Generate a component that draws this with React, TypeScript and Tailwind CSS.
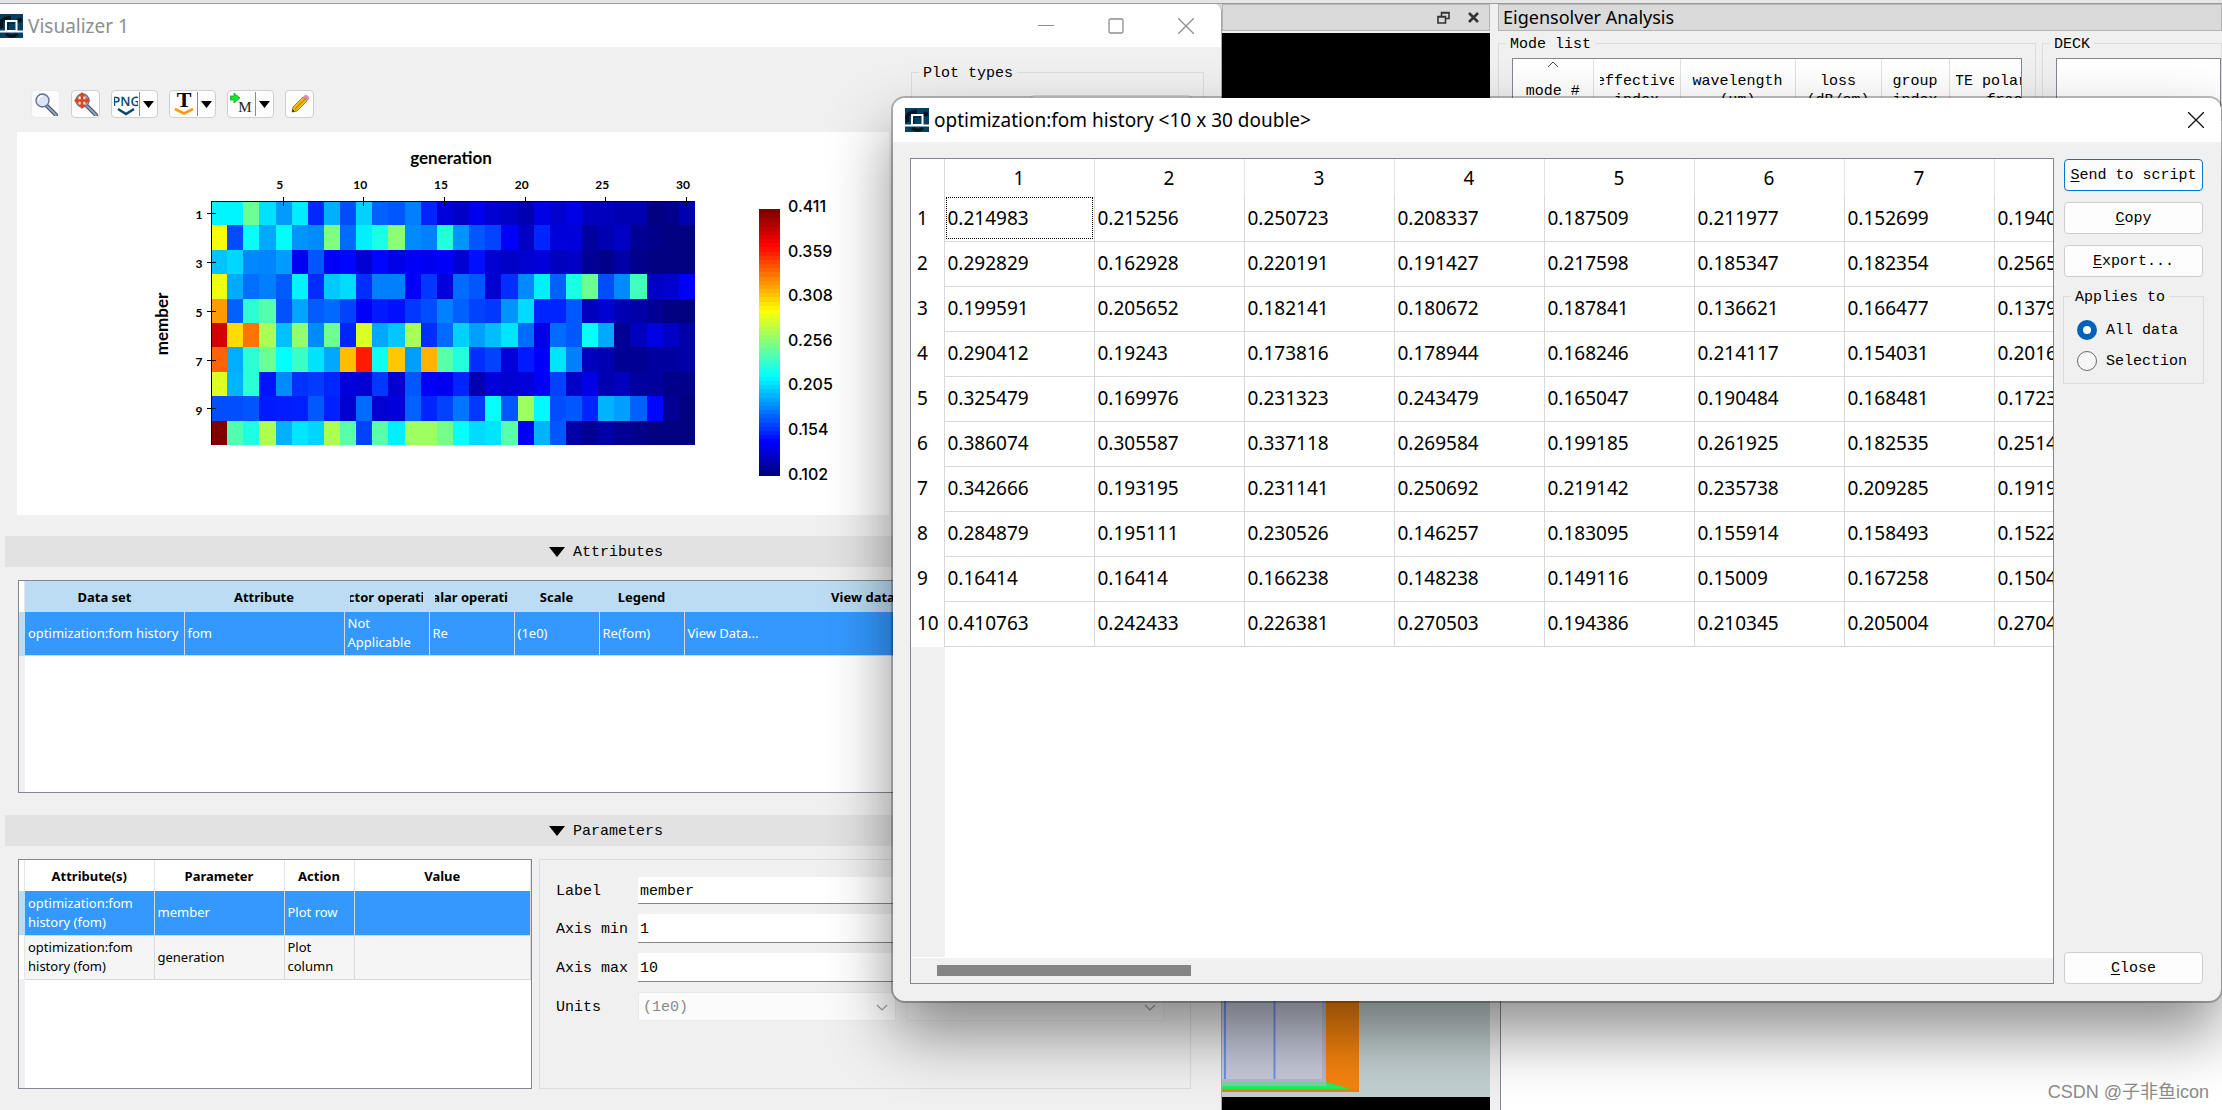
import React from "react";

const SANS = "font-['Noto_Sans','Open_Sans',sans-serif]";
const MONO = "font-['Liberation_Mono','Noto_Sans_CJK_SC',monospace]";

const CELLS: string[][] = [
  ["0.214983", "0.215256", "0.250723", "0.208337", "0.187509", "0.211977", "0.152699", "0.1940"],
  ["0.292829", "0.162928", "0.220191", "0.191427", "0.217598", "0.185347", "0.182354", "0.2565"],
  ["0.199591", "0.205652", "0.182141", "0.180672", "0.187841", "0.136621", "0.166477", "0.1379"],
  ["0.290412", "0.19243", "0.173816", "0.178944", "0.168246", "0.214117", "0.154031", "0.2016"],
  ["0.325479", "0.169976", "0.231323", "0.243479", "0.165047", "0.190484", "0.168481", "0.1723"],
  ["0.386074", "0.305587", "0.337118", "0.269584", "0.199185", "0.261925", "0.182535", "0.2514"],
  ["0.342666", "0.193195", "0.231141", "0.250692", "0.219142", "0.235738", "0.209285", "0.1919"],
  ["0.284879", "0.195111", "0.230526", "0.146257", "0.183095", "0.155914", "0.158493", "0.1522"],
  ["0.16414", "0.16414", "0.166238", "0.148238", "0.149116", "0.15009", "0.167258", "0.1504"],
  ["0.410763", "0.242433", "0.226381", "0.270503", "0.194386", "0.210345", "0.205004", "0.2704"],
];

// Normalised levels (percent of the colour range) for generations 9 to 30.
const LATER: number[][] = [
  [20, 33, 22, 21, 25, 16, 9, 7, 11, 8, 7, 5, 10, 8, 10, 6, 6, 5, 5, 0, 1, 5],
  [23, 36, 40, 51, 26, 25, 41, 27, 21, 19, 12, 7, 16, 9, 9, 3, 5, 7, 2, 1, 0, 0],
  [13, 8, 13, 10, 12, 11, 12, 8, 14, 8, 7, 8, 9, 6, 7, 2, 1, 4, 1, 0, 0, 0],
  [34, 17, 25, 25, 12, 18, 9, 23, 21, 8, 17, 26, 36, 22, 40, 48, 20, 26, 44, 7, 8, 12],
  [19, 12, 15, 14, 18, 20, 25, 22, 19, 18, 27, 34, 16, 16, 21, 6, 8, 5, 4, 2, 0, 0],
  [16, 59, 29, 32, 54, 17, 23, 33, 28, 31, 35, 23, 10, 23, 21, 38, 29, 2, 6, 10, 7, 4],
  [69, 85, 39, 68, 28, 70, 46, 41, 17, 19, 9, 15, 12, 35, 25, 6, 5, 2, 2, 3, 3, 4],
  [9, 8, 18, 8, 21, 12, 11, 16, 5, 9, 8, 9, 12, 19, 7, 10, 5, 6, 3, 3, 1, 1],
  [8, 23, 8, 9, 22, 16, 19, 24, 18, 38, 21, 53, 37, 20, 21, 16, 30, 28, 22, 13, 2, 0],
  [46, 19, 46, 36, 53, 53, 49, 38, 34, 35, 46, 12, 30, 21, 4, 2, 4, 2, 1, 0, 0, 0],
];

const clamp = (n: number) => Math.round(255 * Math.max(0, Math.min(1, n)));
const jet = (t: number) =>
  `rgb(${clamp(Math.min(4 * t - 1.5, 4.5 - 4 * t))},${clamp(Math.min(4 * t - 0.5, 3.5 - 4 * t))},${clamp(Math.min(4 * t + 0.5, 2.5 - 4 * t))})`;

const LEVELS = CELLS.map((row, i) => [
  ...row.map((v) => (parseFloat(v) - 0.102) / 0.309),
  ...LATER[i].map((p) => p / 100),
]);

function Logo() {
  return (
    <svg viewBox="0 0 24 24" className="h-6 w-6 shrink-0" aria-hidden="true">
      <rect width="24" height="24" fill="#04405f" />
      <path d="M3 14C0 7 4 4 12 4" fill="none" stroke="#06121c" strokeWidth="4" />
      <circle cx="20.500" cy="6" r="2.500" fill="#06121c" />
      <path d="M7 20c4 3 8 3 11 0" fill="none" stroke="#06121c" strokeWidth="3" />
      <rect x="7" y="7" width="10.500" height="10" fill="#04405f" stroke="#fff" strokeWidth="2" />
      <path d="M9 16V9h7" fill="none" stroke="#06121c" />
      <path d="M0 17.500h24" stroke="#fff" strokeWidth="2" />
    </svg>
  );
}

function Magnifier() {
  return (
    <>
      <path d="M13 14l9 9" stroke="#46505f" strokeWidth="4" strokeLinecap="round" />
      <path d="M13 14l9 9" stroke="#8fa3c4" strokeWidth="2" strokeLinecap="round" />
      <circle cx="8.5" cy="8.500" r="6.5" fill="#dbe4f6" stroke="#5f6f96" strokeWidth="1.4" />
      <path d="M4.500 8a4 4 0 0 1 4-4" stroke="#fff" strokeWidth="1.6" fill="none" />
    </>
  );
}

function ToolButton({ label, menu, flat, children }: { label: string; menu?: boolean; flat?: boolean; children: React.ReactNode }) {
  return (
    <div className={`flex h-7 rounded border bg-[#fcfcfc] ${flat ? "border-[#ebebeb]" : "border-[#cfcfcf]"}`}>
      <button aria-label={label} className="flex w-[27px] items-center justify-center">
        <svg viewBox="0 0 24 24" className="h-6 w-6">{children}</svg>
      </button>
      {menu && (
        <button aria-label={`${label} options`} className="my-px flex w-[18px] items-center justify-center border-l border-[#8c8c8c]">
          <svg viewBox="0 0 11 7" className="h-[7px] w-[11px]"><path d="M0 0h11L5.500 7z" /></svg>
        </button>
      )}
    </div>
  );
}

function Toolbar() {
  return (
    <div className="flex gap-[11px]">
      <ToolButton label="Zoom" flat><Magnifier /></ToolButton>
      <ToolButton label="Zoom extent">
        <Magnifier />
        <path d="M8 2v13M1.500 8.500h13" stroke="#d9481c" strokeWidth="2.600" />
        <path d="M8 0l4 4.500H4zM8 17l4-4.500H4zM0 8.500l4.500-4v8zM16 8.500l-4.500-4v8z" fill="#d9481c" />
      </ToolButton>
      <ToolButton label="Export PNG" menu>
        <text x="12" y="14" textAnchor="middle" fontFamily="Open Sans" fontSize="13" fontWeight="600" textRendering="geometricPrecision" fill="#0b4a6b">PNG</text>
        <path d="M4 17l8 5 8-5" fill="none" stroke="#0b4a6b" strokeWidth="2.600" />
      </ToolButton>
      <ToolButton label="Export text" menu>
        <text x="12" y="15" textAnchor="middle" fontFamily="Liberation Serif" fontSize="22" fontWeight="700">T</text>
        <path d="M3 17l9 4.500 9-4.500" fill="none" stroke="#ff9c10" strokeWidth="2.600" />
      </ToolButton>
      <ToolButton label="Export to MATLAB" menu>
        <path d="M0 4h4V1l6 5-6 5V8H0z" fill="#12e629" stroke="#0b9b1d" strokeWidth=".7" />
        <text x="15" y="20" textAnchor="middle" fontFamily="Liberation Serif" fontSize="15" fill="#222">M</text>
      </ToolButton>
      <ToolButton label="Edit">
        <path d="M4 20l1-5L15 5l4 4L9 19z" fill="#f7bd10" stroke="#8a6512" strokeWidth=".8" />
        <path d="M15 5l2-2c1-1 5 2 4 4l-2 2z" fill="#e38aa4" />
        <path d="M7 17L17 7" stroke="#c88c00" strokeWidth="1.400" />
        <path d="M4 20l.6-3 2.400 2.400z" fill="#333" />
      </ToolButton>
    </div>
  );
}

function Plot() {
  const w = 484 / 30;
  const h = 244 / 10;
  return (
    <svg width="872" height="383" viewBox="17 132 872 383" role="img" aria-label="fom history by generation and member" className="block bg-white">
      <g fontFamily="Lato, sans-serif" fontWeight="700" textAnchor="middle">
        <text x="451" y="164" fontSize="17">generation</text>
        <text x="168" y="324" fontSize="17" transform="rotate(-90 168 324)">member</text>
        <g fontSize="12">
          {[5, 10, 15, 20, 25, 30].map((n) => (
            <text key={n} x={196 + n * w + 3} y="189">{n}</text>
          ))}
          {[1, 3, 5, 7, 9].map((n) => (
            <text key={n} x="199" y={207 + n * h - 12}>{n}</text>
          ))}
        </g>
      </g>
      <g shapeRendering="crispEdges">
        {LEVELS.map((row, r) =>
          row.map((t, c) => (
            <rect key={`${r}-${c}`} x={211 + c * w} y={201 + r * h} width={w + 0.2} height={h + 0.2} fill={jet(t)} />
          )),
        )}
        <path d="M211.500 445V201.500H695" fill="none" stroke="#000" />
        {[5, 10, 15, 20, 25, 30].map((n) => (
          <path key={n} d={`M${Math.round(210 + (n - 0.5) * w)}.5 197v9`} stroke="#000" />
        ))}
        {[1, 3, 5, 7, 9].map((n) => (
          <path key={n} d={`M207 ${Math.round(201 + (n - 0.5) * h)}.5h9`} stroke="#000" />
        ))}
        {Array.from({ length: 64 }, (_, i) => (
          <rect key={i} x="759" y={209 + ((63 - i) * 267) / 64} width="21" height="5" fill={jet(i / 63)} />
        ))}
        <rect x="755" y="476" width="30" height="6" fill="#fff" />
      </g>
      <g fontFamily="Inter, sans-serif" fontSize="16" fontWeight="500">
        {["0.411", "0.359", "0.308", "0.256", "0.205", "0.154", "0.102"].map((v, i) => (
          <text key={v} x="788" y={212 + Math.round(i * 44.600)}>{v}</text>
        ))}
      </g>
    </svg>
  );
}

function SectionBar({ title }: { title: string }) {
  return (
    <button className={`flex h-[31px] w-full items-center gap-2 bg-[#e2e2e2] pl-[544px] text-[15px] ${MONO}`}>
      <svg viewBox="0 0 16 10" className="h-[10px] w-4"><path d="M0 0h16L8 10z" /></svg>
      <span className="pt-1">{title}</span>
    </button>
  );
}

function AttributesTable() {
  const td = "border-r border-b border-[#d8d8d8] bg-[#3399ff] pl-[3px] text-left leading-[19px] text-white";
  return (
    <div className="h-[213px] overflow-hidden border border-[#828790] bg-white">
      <div className="flex h-full">
        <div className="flex w-[6px] shrink-0 flex-col bg-[#f0f0f0]">
          <div className="h-[31px] border-r border-[#e5e5e5] bg-white" />
          <div className="h-11 bg-[#b9dcf3]" />
        </div>
        <table className="w-full table-fixed border-collapse self-start text-[13px]">
          <colgroup>
            <col className="w-[159px]" /><col className="w-40" /><col className="w-[85px]" /><col className="w-[85px]" />
            <col className="w-[85px]" /><col className="w-[85px]" /><col className="w-[358px]" /><col />
          </colgroup>
          <thead>
            <tr className="h-[31px] bg-[#bbdcf2]">
              {["Data set", "Attribute", "Vector operation", "Scalar operation", "Scale", "Legend", "View data", ""].map((t, i) => (
                <th key={i} className="px-[6px] pt-[3px] font-bold whitespace-nowrap">
                  <div className="flex justify-center overflow-hidden"><span>{t}</span></div>
                </th>
              ))}
            </tr>
          </thead>
          <tbody>
            <tr className="h-[43px]">
              <td className={`${td} whitespace-nowrap`}>optimization:fom history</td>
              <td className={td}>fom</td>
              <td className={td}>Not Applicable</td>
              <td className={td}>Re</td>
              <td className={td}>(1e0)</td>
              <td className={td}>Re(fom)</td>
              <td className={td}>View Data...</td>
              <td className={td} />
            </tr>
          </tbody>
        </table>
      </div>
    </div>
  );
}

function ParametersTable() {
  return (
    <div className="h-[230px] w-[514px] shrink-0 overflow-hidden border border-[#828790] bg-white">
      <div className="flex h-full">
        <div className="flex w-[6px] shrink-0 flex-col bg-[#f0f0f0]">
          <div className="h-[31px] border-r border-[#e5e5e5] bg-white" />
          <div className="h-11 bg-[#b9dcf3]" />
          <div className="h-11 border-r border-[#e5e5e5] bg-white" />
        </div>
        <table className="w-full table-fixed border-collapse self-start text-[13px]">
          <colgroup>
            <col className="w-[129px]" /><col className="w-[130px]" /><col className="w-[70px]" /><col />
          </colgroup>
          <thead>
            <tr className="h-[31px]">
              {["Attribute(s)", "Parameter", "Action", "Value"].map((t) => (
                <th key={t} className="border-r border-[#e5e5e5] pt-[3px] font-bold">{t}</th>
              ))}
            </tr>
          </thead>
          <tbody>
            {[["member", "Plot row"], ["generation", "Plot column"]].map(([name, action], i) => (
              <tr key={name} className={i === 0 ? "h-11 bg-[#3399ff] text-white" : "h-11 bg-[#f5f5f5]"}>
                {["optimization:fom history (fom)", name, action, ""].map((t, k) => (
                  <td key={k} className="border-r border-b border-[#d8d8d8] pl-[3px] leading-[19px]">{t}</td>
                ))}
              </tr>
            ))}
          </tbody>
        </table>
      </div>
    </div>
  );
}

function Chevron() {
  return (
    <svg viewBox="0 0 12 7" className="pointer-events-none absolute top-3 right-2 h-[7px] w-3" aria-hidden="true">
      <path d="M1 1l5 5 5-5" fill="none" stroke="#9a9a9a" strokeWidth="1.200" />
    </svg>
  );
}

function ParametersForm() {
  const fields: [string, string, string][] = [["Label", "member", "h-[27px]"], ["Axis min", "1", "h-[29px]"], ["Axis max", "10", "h-[29px]"]];
  return (
    <div className={`flex min-w-0 flex-1 flex-col gap-[10px] border border-[#dcdcdc] pt-[17px] pr-[26px] pl-4 text-[15px] ${MONO}`}>
      {fields.map(([label, value, h]) => (
        <label key={label} className="flex items-center">
          <span className="w-[82px] pt-[3px]">{label}</span>
          <input defaultValue={value} className={`${h} min-w-0 flex-1 border-b border-[#868686] bg-white px-[2px] pt-[3px] outline-none`} />
        </label>
      ))}
      <div className="flex items-center">
        <label htmlFor="units" className="w-[82px] shrink-0 pt-[3px]">Units</label>
        <div className="relative w-[258px]">
          <select id="units" disabled className="h-[29px] w-full appearance-none border border-[#e9e9e9] bg-[#fbfbfb] px-[4px] pt-[3px] text-[#8a8a8a] opacity-100"><option>(1e0)</option></select>
          <Chevron />
        </div>
        <div className="relative ml-[11px] min-w-0 flex-1">
          <select aria-label="Unit name" disabled className="h-[29px] w-full appearance-none border border-[#e9e9e9] bg-[#f4f4f4] opacity-100"><option /></select>
          <Chevron />
        </div>
      </div>
    </div>
  );
}

function GroupTitle({ children }: { children: React.ReactNode }) {
  return <legend className="ml-[7px] px-1 pt-[3px] leading-[18px]">{children}</legend>;
}

function Visualizer() {
  return (
    <section className={`absolute top-1 bottom-0 left-0 flex w-[55%] flex-col overflow-hidden rounded-tr-lg border-r border-[#a8a8a8] bg-[#f0f0f0] ${SANS}`}>
      <header className="flex h-[43px] shrink-0 items-center bg-white pr-[27px]">
        <div className="-ml-px mr-[5px]"><Logo /></div>
        <h1 className="text-[19px] leading-6 text-[#8e8e8e]">Visualizer 1</h1>
        <div className="ml-auto flex items-center gap-[54px] text-[#8e8e8e]">
          <button aria-label="Minimize"><svg viewBox="0 0 16 16" className="h-4 w-4"><path d="M0 7.500h16" stroke="currentColor" /></svg></button>
          <button aria-label="Maximize"><svg viewBox="0 0 16 16" className="h-4 w-4"><rect x="1" y="1" width="14" height="14" rx="1.500" fill="none" stroke="currentColor" strokeWidth="1.300" /></svg></button>
          <button aria-label="Close visualizer"><svg viewBox="0 0 16 16" className="h-4 w-4"><path d="M0 0l16 16M16 0L0 16" stroke="currentColor" strokeWidth="1.300" /></svg></button>
        </div>
      </header>
      <div className="flex h-[468px] shrink-0 pl-[17px]">
        <div>
          <div className="h-[85px] pt-[43px] pl-[14px]"><Toolbar /></div>
          <Plot />
        </div>
        <fieldset className={`mt-[15px] mr-[17px] mb-4 ml-[22px] min-w-0 flex-1 border border-[#dcdcdc] text-[15px] ${MONO}`}>
          <GroupTitle>Plot types</GroupTitle>
          <div className="mt-[12px] ml-[118px] h-8 w-[162px] rounded border border-[#d0d0d0] bg-[#fcfcfc]" />
        </fieldset>
      </div>
      <div className="mt-[21px] pr-[17px] pl-[5px]"><SectionBar title="Attributes" /></div>
      <div className="mt-[13px] pr-[30px] pl-[18px]"><AttributesTable /></div>
      <div className="mt-[22px] pr-[17px] pl-[5px]"><SectionBar title="Parameters" /></div>
      <div className="mt-[13px] flex gap-[7px] pr-[30px] pl-[18px]">
        <ParametersTable />
        <ParametersForm />
      </div>
    </section>
  );
}

function CenterDock() {
  return (
    <section className="flex h-full flex-col bg-black">
      <header className="flex h-[27px] shrink-0 items-center justify-end gap-[17px] border border-[#b4b4b4] bg-[#dadada] pr-[9px]">
        <button aria-label="Float panel">
          <svg viewBox="0 0 13 13" className="h-[13px] w-[13px]"><path d="M4.500 5V1.500h7.500v6H9M4 2h8.500" fill="none" stroke="#333" strokeWidth="1.600" /><path d="M1 5.500h7.500v6.500H1zM1 6h8" fill="none" stroke="#333" strokeWidth="1.600" /></svg>
        </button>
        <button aria-label="Close panel">
          <svg viewBox="0 0 13 13" className="h-[13px] w-[13px]"><path d="M2 2l9 9M11 2l-9 9" stroke="#333" strokeWidth="2.600" /></svg>
        </button>
      </header>
      <div className="h-[2px] shrink-0 bg-[#f0f0f0]" />
      <div className="flex flex-1 flex-col justify-end pb-[13px]">
        <svg viewBox="0 0 269 120" preserveAspectRatio="xMaxYMax slice" className="block h-[120px] w-full" aria-label="3D view">
          <rect width="269" height="120" fill="#c2cfd0" />
          <rect width="138" height="114" fill="#f5830d" />
          <rect width="105" height="108" fill="#b7b5cc" />
          <rect width="101" height="102" fill="#c4c8d8" />
          <path d="M4 0v102M53.500 0v102" stroke="#6f8fe8" strokeWidth="2" />
          <rect y="102" width="105" height="3" fill="#b7b5cc" />
          <rect y="105" width="105" height="5" fill="#7cd39c" />
          <path d="M0 109h105v-4l24 7H0z" fill="#1cf062" />
          <rect y="112" width="138" height="3" fill="#e8820e" />
        </svg>
      </div>
    </section>
  );
}

function RightDock() {
  const heads: [string, string, string][] = [
    ["effective", "index", "w-[87px]"], ["wavelength", "(μm)", "w-[115px]"], ["loss", "(dB/cm)", "w-[86px]"], ["group", "index", "w-[68px]"], ["TE polarization", "fraction", "w-[147px]"],
  ];
  return (
    <section className="flex h-full min-w-0 flex-1 flex-col overflow-hidden bg-[#f0f0f0]">
      <header className={`flex h-[27px] shrink-0 items-center border border-[#b4b4b4] bg-[#dadada] pl-1 text-[18px] ${SANS}`}>
        <h2>Eigensolver Analysis</h2>
      </header>
      <div className={`flex h-[90px] shrink-0 gap-[6px] pt-[2px] text-[15px] ${MONO}`}>
        <fieldset className="w-[538px] min-w-0 shrink-0 overflow-hidden border border-[#dcdcdc]">
          <GroupTitle>Mode list</GroupTitle>
          <div className="mx-[13px] mt-[4px] h-20 overflow-hidden border border-[#828790] bg-white">
            <table className="w-[583px] table-fixed border-collapse text-center leading-[19px]">
              <colgroup>
                <col className="w-[80px]" />
                {heads.map(([, , w], i) => <col key={i} className={w} />)}
              </colgroup>
              <thead>
                <tr className="h-16">
                  <th className="border-r border-[#e0e0e0] align-top font-normal">
                    <svg viewBox="0 0 12 7" className="mx-auto mt-[2px] mb-[14px] h-[7px] w-3"><path d="M1 6l5-5 5 5" fill="none" stroke="#444" /></svg>
                    mode #
                  </th>
                  {heads.map(([a, b], i) => (
                    <th key={i} className="border-r border-[#e0e0e0] px-[6px] pt-[13px] align-top font-normal whitespace-nowrap">
                      <div className="flex justify-center overflow-hidden"><span>{a}<br />{b}</span></div>
                    </th>
                  ))}
                </tr>
              </thead>
            </table>
          </div>
        </fieldset>
        <fieldset className="min-w-0 flex-1 border border-[#dcdcdc]">
          <GroupTitle>DECK</GroupTitle>
          <div className="mt-[4px] ml-[13px] h-20 border border-[#828790] bg-white" />
        </fieldset>
      </div>
      <div className="ml-[2px] flex-1 border-l border-[#828790] bg-white" />
    </section>
  );
}

function DialogButton({ text, primary }: { text: string; primary?: boolean }) {
  return (
    <button className={`h-8 w-full rounded border bg-[#fdfdfd] pt-[3px] ${primary ? "border-[#0078d4]" : "border-[#cdcdcd]"}`}>
      <span className="underline underline-offset-2">{text[0]}</span>{text.slice(1)}
    </button>
  );
}

function Radio({ text, checked }: { text: string; checked?: boolean }) {
  return (
    <label className="flex h-5 items-center gap-[9px]">
      <input type="radio" name="scope" defaultChecked={checked} className="h-5 w-5 shrink-0 appearance-none rounded-full border border-[#6a6a6a] bg-[#f6f6f6] checked:border-[6px] checked:border-[#0061ba] checked:bg-white" />
      <span className="pt-[3px]">{text}</span>
    </label>
  );
}

function DataDialog() {
  return (
    <section role="dialog" aria-label="optimization:fom history" className={`absolute top-[98px] right-px bottom-[109px] left-[893px] flex flex-col overflow-hidden rounded-xl bg-[#f0f0f0] shadow-[0_0_0_2px_rgba(0,0,0,0.25),0_32px_64px_rgba(0,0,0,0.45)] ${SANS}`}>
      <header className="flex h-11 shrink-0 items-center bg-white pr-[17px] pl-3">
        <Logo />
        <h2 className="ml-[5px] text-[19px] leading-6">optimization:fom history &lt;10 x 30 double&gt;</h2>
        <button aria-label="Close dialog" className="ml-auto">
          <svg viewBox="0 0 16 16" className="h-4 w-4"><path d="M0 0l16 16M16 0L0 16" stroke="#111" strokeWidth="1.300" /></svg>
        </button>
      </header>
      <div className="flex min-h-0 flex-1 gap-[9px] pt-4 pr-[17px] pb-[17px] pl-[17px]">
        <div className="flex min-w-0 flex-1 flex-col border border-[#828790] bg-white">
          <div className="flex min-h-0 flex-1 flex-col overflow-hidden">
            <table className="w-[1233px] shrink-0 table-fixed border-collapse text-[19px]">
              <colgroup>
                <col className="w-[33px]" />
                {CELLS[0].map((_, i) => <col key={i} className="w-[150px]" />)}
              </colgroup>
              <thead>
                <tr className="h-[37px]">
                  <td className="border-r border-[#d8d8d8]" />
                  {CELLS[0].map((_, i) => (
                    <th key={i} className="border-r border-[#e4e4e4] pt-[2px] font-normal">{i + 1}</th>
                  ))}
                </tr>
              </thead>
              <tbody>
                {CELLS.map((row, r) => (
                  <tr key={r} className="h-[45px]">
                    <th className="border-r border-[#d8d8d8] pl-[6px] text-left font-normal">{r + 1}</th>
                    {row.map((v, c) => (
                      <td key={c} className="border-r border-b border-[#d8d8d8] p-px">
                        <div className={`flex h-[42px] items-center ${r === 0 && c === 0 ? "border border-dotted border-black pl-px" : "pl-[2px]"}`}>{v}</div>
                      </td>
                    ))}
                  </tr>
                ))}
              </tbody>
            </table>
            <div className="w-[34px] flex-1 bg-[#f0f0f0]" />
          </div>
          <div className="mt-px flex h-[25px] shrink-0 items-center bg-[#f0f0f0] pl-[26px]">
            <div className="h-[11px] w-[254px] bg-[#858585]" />
          </div>
        </div>
        <div className={`flex w-[141px] shrink-0 flex-col text-[15px] ${MONO}`}>
          <div className="flex flex-col gap-[11px] px-px pt-px">
            <DialogButton text="Send to script" primary />
            <DialogButton text="Copy" />
            <DialogButton text="Export..." />
          </div>
          <fieldset className="mt-[9px] h-[98px] min-w-0 border border-[#dcdcdc]">
            <GroupTitle>Applies to</GroupTitle>
            <div className="mt-[13px] ml-[13px] flex flex-col gap-[11px]">
              <Radio text="All data" checked />
              <Radio text="Selection" />
            </div>
          </fieldset>
          <div className="mt-auto px-px"><DialogButton text="Close" /></div>
        </div>
      </div>
    </section>
  );
}

export default function App() {
  return (
    <main className="relative flex h-screen w-full flex-col overflow-hidden bg-[#f0f0f0] text-black">
      <div className="h-1 shrink-0 border-b border-[#9b9b9b] bg-[#e6e6e6]" />
      <div className="flex min-h-0 flex-1">
        <div className="w-[55%] shrink-0 bg-[#dadada]" />
        <div className="mr-2 w-[268px] shrink-0"><CenterDock /></div>
        <RightDock />
      </div>
      <Visualizer />
      <DataDialog />
      <div className="absolute right-[13px] bottom-[6px] font-['Liberation_Sans','Noto_Sans_CJK_SC',sans-serif] text-[18px] leading-6 text-[#8a8a8a]">CSDN @子非鱼icon</div>
    </main>
  );
}
